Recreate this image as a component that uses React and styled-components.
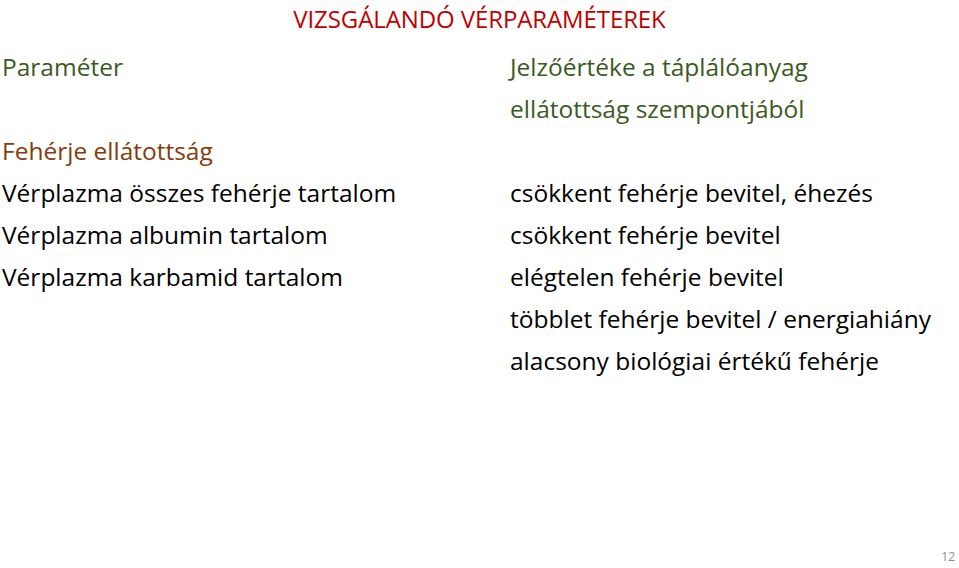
import React from 'react';
import styled, { createGlobalStyle } from 'styled-components';

const GlobalStyle = createGlobalStyle`
  html, body {
    margin: 0;
    padding: 0;
    background: #ffffff;
  }
`;

const Slide = styled.div`
  position: relative;
  width: 959px;
  height: 568px;
  overflow: hidden;
  background: #ffffff;
  font-family: 'Open Sans', 'Liberation Sans', sans-serif;
  font-size: 24.5px;
`;

const Title = styled.h1`
  margin: 0;
  padding-top: 4px;
  height: 46px;
  box-sizing: border-box;
  line-height: 30px;
  font-size: 24px;
  font-weight: 400;
  letter-spacing: -0.1px;
  color: #c00000;
  text-align: center;
`;

const Table = styled.div`
  display: grid;
  grid-template-columns: 508px 1fr;
  padding-left: 2px;
`;

const Column = styled.div`
  display: flex;
  flex-direction: column;
`;

const Line = styled.div`
  height: 42px;
  line-height: 42px;
  white-space: nowrap;
  color: ${(p) => p.$color || '#000000'};
`;

const PageNum = styled.div`
  position: absolute;
  right: 4px;
  bottom: 3px;
  font-size: 12px;
  color: #8c8c8c;
`;

const green = '#3b5a1f';
const brown = '#843c0c';

const params = [
  'Vérplazma összes fehérje tartalom',
  'Vérplazma albumin tartalom',
  'Vérplazma karbamid tartalom',
];

const signals = [
  'csökkent fehérje bevitel, éhezés',
  'csökkent fehérje bevitel',
  'elégtelen fehérje bevitel',
  'többlet fehérje bevitel / energiahiány',
  'alacsony biológiai értékű fehérje',
];

function App() {
  return (
    <>
      <GlobalStyle />
      <Slide>
        <Title>VIZSGÁLANDÓ VÉRPARAMÉTEREK</Title>
        <Table>
          <Column>
            <Line $color={green}>Paraméter</Line>
            <Line />
            <Line $color={brown}>Fehérje ellátottság</Line>
            {params.map((p) => (
              <Line key={p}>{p}</Line>
            ))}
          </Column>
          <Column>
            <Line $color={green}>Jelzőértéke a táplálóanyag</Line>
            <Line $color={green}>ellátottság szempontjából</Line>
            <Line />
            {signals.map((s) => (
              <Line key={s}>{s}</Line>
            ))}
          </Column>
        </Table>
        <PageNum>12</PageNum>
      </Slide>
    </>
  );
}

export default App;
